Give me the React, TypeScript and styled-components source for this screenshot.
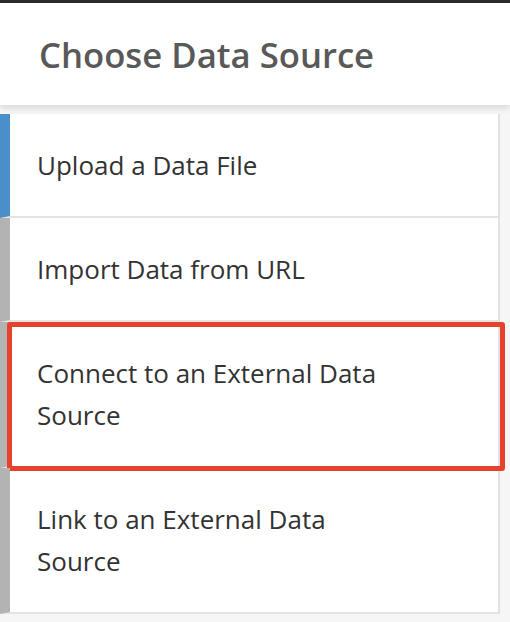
import styled, { createGlobalStyle } from 'styled-components';

const GlobalStyle = createGlobalStyle`
  html, body {
    margin: 0;
    padding: 0;
    background: #f6f6f6;
    font-family: "Open Sans", "Liberation Sans", sans-serif;
  }
`;

const Page = styled.div`
  display: flex;
  flex-direction: column;
  width: 510px;
  min-height: 622px;
  border-top: 3px solid #2c2c2c;
  background: #f6f6f6;
`;

const Header = styled.header`
  position: relative;
  z-index: 1;
  background: #ffffff;
  padding: 29px 39px 27px;
  box-shadow: 0 3px 7px rgba(0, 0, 0, 0.13);
`;

const Title = styled.h1`
  margin: 0;
  font-size: 34.7px;
  font-weight: 600;
  line-height: 46px;
  color: #595959;
`;

const List = styled.ul`
  list-style: none;
  margin: 9px 0 0;
  padding: 0;
  width: 498px;
  background: #ffffff;
  border-right: 2px solid #e2e2e2;
`;

const Item = styled.li<{ $active?: boolean; $highlighted?: boolean }>`
  position: relative;
  padding: 30px 100px 30px 27px;
  border-left: 10px solid ${(p) => (p.$active ? '#4a8fc7' : '#b3b3b3')};
  border-bottom: 2px solid #e4e4e4;
  font-size: 26px;
  line-height: 42px;
  color: #333333;
  cursor: pointer;

  ${(p) =>
    p.$highlighted &&
    `
    &::after {
      content: '';
      position: absolute;
      left: -3px;
      right: -7px;
      top: 0;
      bottom: -5px;
      border: 5px solid #e8412b;
      border-radius: 3px;
      pointer-events: none;
    }
  `}
`;

const sources = [
  { label: 'Upload a Data File', active: true },
  { label: 'Import Data from URL' },
  { label: 'Connect to an External Data Source', highlighted: true },
  { label: 'Link to an External Data Source' },
];

export default function App() {
  return (
    <>
      <GlobalStyle />
      <Page>
        <Header>
          <Title>Choose Data Source</Title>
        </Header>
        <List>
          {sources.map((s) => (
            <Item key={s.label} $active={s.active} $highlighted={s.highlighted}>
              {s.label}
            </Item>
          ))}
        </List>
      </Page>
    </>
  );
}
